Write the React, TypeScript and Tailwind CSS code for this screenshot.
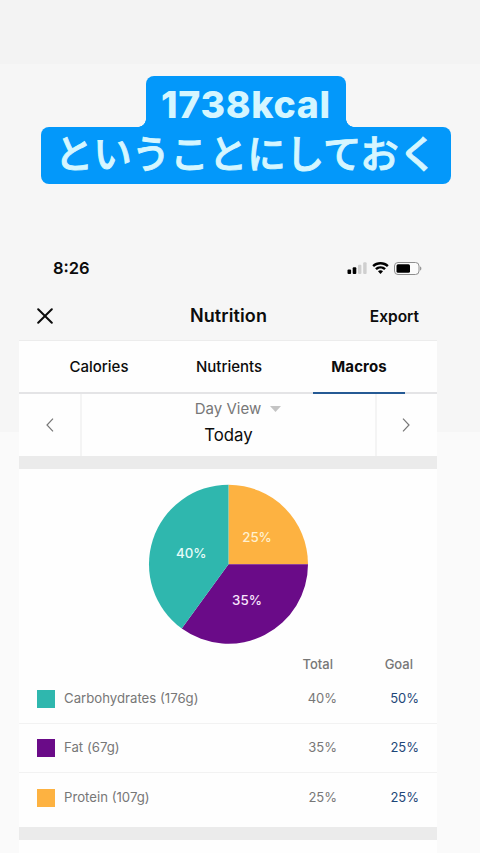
import { useState } from "react"

const tabs = ["Calories", "Nutrients", "Macros"]

const macros = [
  { name: "Carbohydrates", grams: 176, total: 40, goal: 50, color: "bg-[#2fb7ae]" },
  { name: "Fat", grams: 67, total: 35, goal: 25, color: "bg-[#6a0b88]" },
  { name: "Protein", grams: 107, total: 25, goal: 25, color: "bg-[#fdb241]" },
]

function Caption() {
  return (
    <div className="flex flex-col items-center pt-[76px] pl-3 text-[#d5f6ff]">
      <div className="flex items-end">
        {/* inner corner fillets */}
        <div className="size-2 bg-[radial-gradient(circle_at_0_0,transparent_7.5px,#0398fa_8px)]" />
        <div className="flex h-[51px] w-[200px] items-center justify-center rounded-t-lg bg-[#0398fa] pt-1.5 text-[37.5px] leading-none font-extrabold tracking-[0.7px]">
          1738kcal
        </div>
        <div className="size-2 bg-[radial-gradient(circle_at_100%_0,transparent_7.5px,#0398fa_8px)]" />
      </div>
      <div className="flex h-[57px] w-[410px] items-center justify-center rounded-lg bg-[#0398fa] pb-0.5 text-[38.5px] leading-none font-medium whitespace-nowrap [-webkit-text-stroke:0.9px_#d5f6ff]">
        ということにしておく
      </div>
    </div>
  )
}

function StatusBar() {
  return (
    <div className="flex h-6 items-center justify-between pr-[15px] pl-[34px]">
      <span className="text-[16.5px] leading-6 font-semibold">8:26</span>
      <div className="flex items-center">
        <svg width="20" height="12" viewBox="0 0 20 12">
          <rect x="0.5" y="7.5" width="3.6" height="4.5" rx="1" />
          <rect x="5.7" y="5.2" width="3.6" height="6.8" rx="1" />
          <rect x="11" y="2.8" width="3.4" height="9.2" rx="1" fill="#cfcfcf" />
          <rect x="16.2" y="0.2" width="3.4" height="11.8" rx="1" fill="#cfcfcf" />
        </svg>
        <svg className="ml-[5px]" width="17" height="12" viewBox="0 0 17 12">
          <path d="M8.5 0C5.3 0 2.4 1.2 0.3 3.2L2 5C3.7 3.4 6 2.4 8.5 2.4S13.3 3.4 15 5l1.7-1.8C14.6 1.2 11.7 0 8.5 0Z" />
          <path d="M8.5 4.2c-2.1 0-4 .8-5.4 2.1l1.7 1.8c1-.9 2.3-1.5 3.7-1.5s2.7.6 3.7 1.5l1.7-1.8C12.5 5 10.6 4.2 8.5 4.2Z" />
          <path d="M8.5 8.3c-1 0-1.9.4-2.5 1L8.5 12 11 9.3c-.6-.6-1.5-1-2.5-1Z" />
        </svg>
        <svg className="ml-[5px]" width="28" height="13" viewBox="0 0 28 13">
          <rect x="0.5" y="0.5" width="24.5" height="12" rx="3.5" fill="#fbfbfb" stroke="#8e8e8e" />
          <rect x="2.5" y="2.3" width="13.5" height="8.4" rx="1.5" />
          <path d="M26 4.5v4c.9-.3 1.4-1.1 1.4-2s-.5-1.7-1.4-2Z" fill="#999" />
        </svg>
      </div>
    </div>
  )
}

function MacroPie() {
  return (
    <svg
      className="mx-auto block"
      width="160"
      height="160"
      viewBox="-80.5 -80.2 160 160"
      fill="white"
      fontSize="13.3"
      fontWeight="500"
      textAnchor="middle"
    >
      <path d="M0 0V-79.5A79.5 79.5 0 0 1 79.5 0Z" fill="#fdb241" />
      <path d="M0 0H79.5A79.5 79.5 0 0 1-46.73 64.32Z" fill="#6a0b88" />
      <path d="M0 0L-46.73 64.32A79.5 79.5 0 0 1 0-79.5Z" fill="#2fb7ae" />
      <text x="28.5" y="-22.7" fill="#fff0cf">25%</text>
      <text x="18.5" y="40.8" fill="#f8e6fc">35%</text>
      <text x="-37.2" y="-6.5" fill="#e6fbf9">40%</text>
    </svg>
  )
}

export default function App() {
  const [activeTab, setActiveTab] = useState("Macros")

  return (
    <div className="h-[853px] w-[480px] overflow-hidden bg-[linear-gradient(#f3f3f3_64px,#f6f6f6_64px,#f6f6f6_432px,#fafafa_432px)] font-['Inter','Noto_Sans_CJK_JP',sans-serif] text-[#0c0c0c]">
      <Caption />

      <div className="mt-[72px] ml-[19px] w-[418px]">
        <StatusBar />

        {/* Title bar */}
        <div className="mt-4 grid h-[45px] grid-cols-3 items-start border-b border-[#ececec] px-[18px] pt-2">
          <button className="flex h-6 items-center" aria-label="Close">
            <svg width="16" height="16" viewBox="0 0 16 16" stroke="#0c0c0c" strokeWidth="2" strokeLinecap="round">
              <path d="M1.2 1.2L14.8 14.8M14.8 1.2L1.2 14.8" />
            </svg>
          </button>
          <h1 className="pl-px text-center text-[18px] leading-6 font-semibold tracking-[0.1px]">Nutrition</h1>
          <button className="pt-px text-right text-[15.5px] leading-6 font-semibold">Export</button>
        </div>

        <div className="bg-[#fefefe]">
          {/* Tabs */}
          <div className="flex h-[53px] border-b-2 border-[#e4e4e6] pr-[13px] pl-[15px]">
            {tabs.map((tab) => (
              <button
                key={tab}
                onClick={() => setActiveTab(tab)}
                className="flex h-[53px] flex-1 flex-col items-center justify-between text-[15px]"
              >
                <span className={`pt-[14px] leading-6 ${activeTab === tab ? "font-bold tracking-[0.1px]" : "font-medium"}`}>
                  {tab}
                </span>
                {activeTab === tab && <span className="h-[2px] w-[92px] bg-[#255a94]" />}
              </button>
            ))}
          </div>

          {/* Day picker */}
          <div className="flex h-[62px]">
            <button className="flex w-[63px] items-center justify-center border-r-2 border-[#f4f4f4]" aria-label="Previous">
              <svg width="8" height="14" viewBox="0 0 8 14" fill="none" stroke="#777" strokeWidth="1.2">
                <path d="M7 .7L1 7l6 6.3" />
              </svg>
            </button>
            <div className="flex-1 text-center">
              <div className="flex items-center justify-center gap-[9px] pt-[3px] pl-[19px] text-[15px] leading-6 text-[#777]">
                Day View
                <svg width="11" height="6" viewBox="0 0 11 6" fill="#c4c4c4">
                  <path d="M0 0H11L5.5 6Z" />
                </svg>
              </div>
              <div className="pt-[2px] text-[16.8px] leading-6">Today</div>
            </div>
            <button className="flex w-[62px] items-center justify-center border-l-2 border-[#f4f4f4] pr-0.5" aria-label="Next">
              <svg width="8" height="14" viewBox="0 0 8 14" fill="none" stroke="#777" strokeWidth="1.2">
                <path d="M1 .7L7 7l-6 6.3" />
              </svg>
            </button>
          </div>
          <div className="h-[13px] bg-[#ebebeb]" />

          <div className="pt-[15px]">
            <MacroPie />
          </div>

          {/* Macro table */}
          <div className="mt-[10px] flex h-5 text-[13px] leading-5 font-medium text-[#777]">
            <span className="w-[314px] text-right">Total</span>
            <span className="w-[80px] text-right">Goal</span>
          </div>
          <div className="divide-y divide-[#f2f2f2] pt-px">
            {macros.map((m) => (
              <div key={m.name} className="flex h-[49px] items-center pl-[18px] text-[13.2px] text-[#777]">
                <span className={`size-[18px] ${m.color}`} />
                <span className="w-[182px] pl-[9px]">
                  {m.name} ({m.grams}g)
                </span>
                <span className="w-[100px] text-right text-[13px]">{m.total}%</span>
                <span className="w-[82px] text-right text-[13px] text-[#1d4778]">{m.goal}%</span>
              </div>
            ))}
          </div>
          <div className="mt-[5px] h-[13px] bg-[#ebebeb]" />
          <div className="h-[14px]" />
        </div>
      </div>
    </div>
  )
}
